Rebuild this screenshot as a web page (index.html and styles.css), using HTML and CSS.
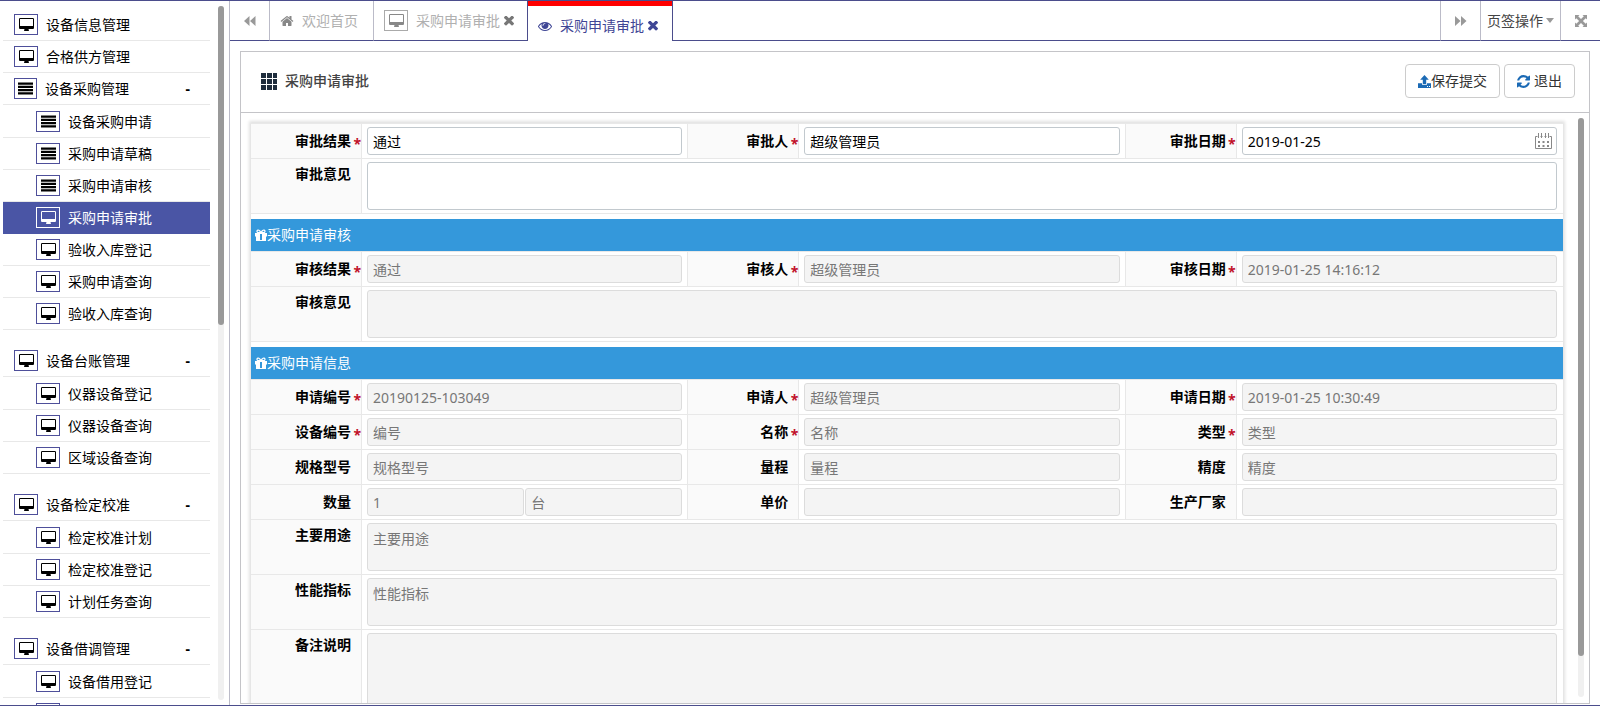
FILE: index.html
```html
<!DOCTYPE html>
<html lang="zh-CN">
<head>
<meta charset="utf-8">
<title>采购申请审批</title>
<link rel="stylesheet" href="styles.css">
</head>
<body>
<svg class="sprite" aria-hidden="true">
  <symbol id="desktop" viewBox="0 0 1920 1664"><path d="M1792 992v-832q0-13-9.500-22.500t-22.500-9.500h-1600q-13 0-22.500 9.500t-9.500 22.500v832q0 13 9.500 22.500t22.500 9.500h1600q13 0 22.500-9.500t9.500-22.500zm128-832v1088q0 66-47 113t-113 47h-544q0 37 16 77.500t32 71 16 43.500q0 26-19 45t-45 19h-512q-26 0-45-19t-19-45q0-14 16-44t32-70 16-78h-544q-66 0-113-47t-47-113v-1088q0-66 47-113t113-47h1600q66 0 113 47t47 113z"/></symbol>
  <symbol id="list" viewBox="0 0 14 11"><path d="M0 0h14v2H0zM0 3h14v2H0zM0 6h14v2H0zM0 9h14v2H0z"/></symbol>
  <symbol id="back" viewBox="0 0 12 10"><path d="M5.500 0v10L0 5zM11.500 0v10L6 5z"/></symbol>
  <symbol id="forward" viewBox="0 0 12 10"><path d="M0 0v10l5.500-5zM6 0v10l5.500-5z"/></symbol>
  <symbol id="home" viewBox="0 0 1792 1792"><path d="M1472 992v480q0 26-19 45t-45 19h-384v-384h-256v384h-384q-26 0-45-19t-19-45v-480q0-1 .5-3t.5-3l575-474 575 474q1 2 1 6zm223-69l-62 74q-8 9-21 11h-3q-13 0-21-7l-692-577-692 577q-12 8-24 7-13-2-21-11l-62-74q-8-10-7-23.500t11-21.500l719-599q32-26 76-26t76 26l244 204v-195q0-14 9-23t23-9h192q14 0 23 9t9 23v408l219 182q10 8 11 21.500t-7 23.500z"/></symbol>
  <symbol id="times" viewBox="300 410 1192 1192"><path d="M1490 1322q0 40-28 68l-136 136q-28 28-68 28t-68-28l-294-294-294 294q-28 28-68 28t-68-28l-136-136q-28-28-28-68t28-68l294-294-294-294q-28-28-28-68t28-68l136-136q28-28 68-28t68 28l294 294 294-294q28-28 68-28t68 28l136 136q28 28 28 68t-28 68l-294 294 294 294q28 28 28 68z"/></symbol>
  <symbol id="eye" viewBox="0 0 1792 1792"><path d="M1664 960q-152-236-381-353 61 104 61 225 0 185-131.500 316.500t-316.500 131.500-316.500-131.500-131.500-316.500q0-121 61-225-229 117-381 353 133 205 333.500 326.500t434.500 121.500 434.500-121.500 333.500-326.500zm-720-384q0-20-14-34t-34-14q-125 0-214.500 89.500t-89.500 214.500q0 20 14 34t34 14 34-14 14-34q0-86 61-147t147-61q20 0 34-14t14-34zm848 384q0 34-20 69-140 230-376.500 368.500t-499.500 138.500-499.500-139-376.500-368q-20-35-20-69t20-69q140-229 376.500-368t499.500-139 499.500 139 376.500 368q20 35 20 69z"/></symbol>
  <symbol id="refresh" viewBox="128 128 1536 1536"><path d="M1639 1056q0 5-1 7-64 268-268 434.500t-478 166.500q-146 0-282.500-55t-243.500-157l-129 129q-19 19-45 19t-45-19-19-45v-448q0-26 19-45t45-19h448q26 0 45 19t19 45-19 45l-137 137q71 66 161 102t187 36q134 0 250-65t186-179q11-17 53-117 8-23 30-23h192q13 0 22.500 9.500t9.500 22.500zm25-800v448q0 26-19 45t-45 19h-448q-26 0-45-19t-19-45 19-45l138-138q-148-137-349-137-134 0-250 65t-186 179q-11 17-53 117-8 23-30 23h-199q-13 0-22.500-9.500t-9.500-22.500v-7q65-268 270-434.500t480-166.500q146 0 284 55.500t245 156.500l130-129q19-19 45-19t45 19 19 45z"/></symbol>
  <symbol id="upload" viewBox="0 0 13 13"><path d="M6.500 0l4.300 4.700H8.200V9H4.800V4.700H2.200zM0 8.300h4v1.500h5V8.300h4V13H0z"/><path class="dots" d="M9 11h1v1H9zM11 11h1v1h-1z"/></symbol>
  <symbol id="expand" viewBox="0 0 12 12"><path d="M0 0h4.500L3.200 1.300 6 4.100l2.800-2.800L7.500 0H12v4.500l-1.300-1.300L7.900 6l2.800 2.800L12 7.500V12H7.500l1.300-1.300L6 7.900l-2.800 2.800L4.500 12H0V7.500l1.300 1.300L4.100 6 1.300 3.200 0 4.500z"/></symbol>
  <symbol id="grid" viewBox="0 0 17 17"><path d="M0 0h5v5H0zM6 0h5v5H6zM12 0h4v5h-4zM0 6h5v5H0zM6 6h5v5H6zM12 6h4v5h-4zM0 12h5v5H0zM6 12h5v5H6zM12 12h4v5h-4z"/></symbol>
  <symbol id="gift" viewBox="0 0 12 12"><path fill-rule="evenodd" d="M0 4h2.300C.8 3 1.200.5 3.200.5c1.400 0 2.200 1 2.800 2C6.600 1.500 7.400.5 8.800.5c2 0 2.400 2.500.9 3.500H12v3.500h-1V12H1V7.500H0zM3.200 1.700c-.9 0-.9 1.300 0 1.300h1.600c-.4-.7-.9-1.300-1.600-1.300zm5.600 0c-.7 0-1.200.6-1.600 1.300h1.600c.9 0 .9-1.300 0-1.300zM5 5v6h2V5z"/></symbol>
  <symbol id="calendar" viewBox="0 0 17 16"><path d="M.5 3.500v12h16v-12M.5 3.500h2M5.500 3.500h2M9.500 3.500h2M14.500 3.500h2M3.500 0v5M6.500 0v5M10.500 0v5M13.500 0v5" fill="none" stroke="currentColor"/><path d="M3 8h2v2H3zM7.500 8h2v2h-2zM12 8h2v2h-2zM3 12h2v2H3zM7.500 12h2v2h-2zM12 12h2v2h-2z"/></symbol>
</svg>
<div class="app">
  <nav class="sidebar">
    <ul class="menu">
      <li><a class="item" href="#"><span class="box"><svg><use href="#desktop"/></svg></span>设备信息管理</a></li>
      <li><a class="item" href="#"><span class="box"><svg><use href="#desktop"/></svg></span>合格供方管理</a></li>
      <li><a class="item" href="#"><span class="box lines"><svg><use href="#list"/></svg></span>设备采购管理<span class="toggle">-</span></a>
        <ul class="submenu">
          <li><a class="item" href="#"><span class="box"><svg><use href="#list"/></svg></span>设备采购申请</a></li>
          <li><a class="item" href="#"><span class="box"><svg><use href="#list"/></svg></span>采购申请草稿</a></li>
          <li><a class="item" href="#"><span class="box"><svg><use href="#list"/></svg></span>采购申请审核</a></li>
          <li><a class="item active" href="#"><span class="box"><svg><use href="#desktop"/></svg></span>采购申请审批</a></li>
          <li><a class="item" href="#"><span class="box"><svg><use href="#desktop"/></svg></span>验收入库登记</a></li>
          <li><a class="item" href="#"><span class="box"><svg><use href="#desktop"/></svg></span>采购申请查询</a></li>
          <li><a class="item" href="#"><span class="box"><svg><use href="#desktop"/></svg></span>验收入库查询</a></li>
        </ul></li>
      <li><a class="item" href="#"><span class="box"><svg><use href="#desktop"/></svg></span>设备台账管理<span class="toggle">-</span></a>
        <ul class="submenu">
          <li><a class="item" href="#"><span class="box"><svg><use href="#desktop"/></svg></span>仪器设备登记</a></li>
          <li><a class="item" href="#"><span class="box"><svg><use href="#desktop"/></svg></span>仪器设备查询</a></li>
          <li><a class="item" href="#"><span class="box"><svg><use href="#desktop"/></svg></span>区域设备查询</a></li>
        </ul></li>
      <li><a class="item" href="#"><span class="box"><svg><use href="#desktop"/></svg></span>设备检定校准<span class="toggle">-</span></a>
        <ul class="submenu">
          <li><a class="item" href="#"><span class="box"><svg><use href="#desktop"/></svg></span>检定校准计划</a></li>
          <li><a class="item" href="#"><span class="box"><svg><use href="#desktop"/></svg></span>检定校准登记</a></li>
          <li><a class="item" href="#"><span class="box"><svg><use href="#desktop"/></svg></span>计划任务查询</a></li>
        </ul></li>
      <li><a class="item" href="#"><span class="box"><svg><use href="#desktop"/></svg></span>设备借调管理<span class="toggle">-</span></a>
        <ul class="submenu">
          <li><a class="item" href="#"><span class="box"><svg><use href="#desktop"/></svg></span>设备借用登记</a></li>
          <li><a class="item" href="#" aria-label="菜单"><span class="box"><svg><use href="#desktop"/></svg></span></a></li>
        </ul></li>
    </ul>
    <div class="track side-track"><div class="thumb side-thumb"></div></div>
  </nav>
  <main class="main">
    <div class="tabs">
      <button class="tab-btn first" type="button" aria-label="向左"><svg class="ico"><use href="#back"/></svg></button>
      <a class="tab home" href="#"><svg class="ico i14"><use href="#home"/></svg>欢迎首页</a>
      <a class="tab doc" href="#"><span class="box"><svg><use href="#desktop"/></svg></span>采购申请审批<svg class="close"><use href="#times"/></svg></a>
      <a class="tab current" href="#"><svg class="ico i14"><use href="#eye"/></svg>采购申请审批<svg class="close"><use href="#times"/></svg></a>
      <span class="spacer"></span>
      <button class="tab-btn" type="button" aria-label="向右"><svg class="ico"><use href="#forward"/></svg></button>
      <button class="tab-btn ops" type="button">页签操作<span class="caret"></span></button>
      <button class="tab-btn" type="button" aria-label="全屏"><svg class="ico"><use href="#expand"/></svg></button>
    </div>
    <section class="panel">
      <header class="panel-head">
        <svg class="grid-ico"><use href="#grid"/></svg>
        <h1>采购申请审批</h1>
        <button class="btn" type="button"><svg><use href="#upload"/></svg>保存提交</button>
        <button class="btn gap" type="button"><svg><use href="#refresh"/></svg>退出</button>
      </header>
      <div class="panel-body">
        <form class="form">
          <div class="block">
            <div class="row">
              <label class="lbl" for="a1">审批结果<span class="req">*</span></label><div class="cell"><input id="a1" value="通过"></div>
              <label class="lbl" for="a2">审批人<span class="req">*</span></label><div class="cell"><input id="a2" value="超级管理员"></div>
              <label class="lbl" for="a3">审批日期<span class="req">*</span></label><div class="cell"><input id="a3" value="2019-01-25"><svg class="cal"><use href="#calendar"/></svg></div>
            </div>
            <div class="row wide"><label class="lbl" for="a4">审批意见</label><div class="cell"><textarea id="a4"></textarea></div></div>
          </div>
          <h2 class="bar"><svg><use href="#gift"/></svg>采购申请审核</h2>
          <div class="block">
            <div class="row">
              <label class="lbl" for="b1">审核结果<span class="req">*</span></label><div class="cell"><input id="b1" value="通过" disabled></div>
              <label class="lbl" for="b2">审核人<span class="req">*</span></label><div class="cell"><input id="b2" value="超级管理员" disabled></div>
              <label class="lbl" for="b3">审核日期<span class="req">*</span></label><div class="cell"><input id="b3" value="2019-01-25 14:16:12" disabled></div>
            </div>
            <div class="row wide"><label class="lbl" for="b4">审核意见</label><div class="cell"><textarea id="b4" disabled></textarea></div></div>
          </div>
          <h2 class="bar"><svg><use href="#gift"/></svg>采购申请信息</h2>
          <div class="block">
            <div class="row">
              <label class="lbl" for="c1">申请编号<span class="req">*</span></label><div class="cell"><input id="c1" value="20190125-103049" disabled></div>
              <label class="lbl" for="c2">申请人<span class="req">*</span></label><div class="cell"><input id="c2" value="超级管理员" disabled></div>
              <label class="lbl" for="c3">申请日期<span class="req">*</span></label><div class="cell"><input id="c3" value="2019-01-25 10:30:49" disabled></div>
            </div>
            <div class="row">
              <label class="lbl" for="d1">设备编号<span class="req">*</span></label><div class="cell"><input id="d1" placeholder="编号" disabled></div>
              <label class="lbl" for="d2">名称<span class="req">*</span></label><div class="cell"><input id="d2" placeholder="名称" disabled></div>
              <label class="lbl" for="d3">类型<span class="req">*</span></label><div class="cell"><input id="d3" placeholder="类型" disabled></div>
            </div>
            <div class="row">
              <label class="lbl" for="e1">规格型号</label><div class="cell"><input id="e1" placeholder="规格型号" disabled></div>
              <label class="lbl" for="e2">量程</label><div class="cell"><input id="e2" placeholder="量程" disabled></div>
              <label class="lbl" for="e3">精度</label><div class="cell"><input id="e3" placeholder="精度" disabled></div>
            </div>
            <div class="row">
              <label class="lbl" for="f1">数量</label><div class="cell"><input id="f1" value="1" disabled><input aria-label="单位" value="台" disabled></div>
              <label class="lbl" for="f2">单价</label><div class="cell"><input id="f2" disabled></div>
              <label class="lbl" for="f3">生产厂家</label><div class="cell"><input id="f3" disabled></div>
            </div>
            <div class="row wide"><label class="lbl" for="g1">主要用途</label><div class="cell"><textarea id="g1" placeholder="主要用途" disabled></textarea></div></div>
            <div class="row wide"><label class="lbl" for="g2">性能指标</label><div class="cell"><textarea id="g2" placeholder="性能指标" disabled></textarea></div></div>
            <div class="row wide"><label class="lbl" for="g3">备注说明</label><div class="cell"><textarea id="g3" class="tall" disabled></textarea></div></div>
          </div>
        </form>
        <div class="track body-track"><div class="thumb body-thumb"></div></div>
      </div>
    </section>
  </main>
</div>
</body>
</html>
```
FILE: styles.css
```css
* { box-sizing: border-box; }
body { margin: 0; }
body, input, textarea, button {
  font-family: "Noto Sans", "Noto Sans CJK SC", sans-serif;
  font-size: 14px;
  line-height: 20px;
  color: #000;
}
svg { fill: currentColor; flex: none; }
.sprite { display: none; }
a { color: inherit; text-decoration: none; }
ul { list-style: none; margin: 0; padding: 0; }
button { background: none; border: 0; padding: 0; cursor: pointer; }

.app {
  display: flex;
  height: 100vh;
  overflow: hidden;
  border-top: 1px solid #4b4d8c;
  border-bottom: 1px solid #4b4d8c;
}

/* sidebar */
.sidebar {
  position: relative;
  flex: none;
  width: 230px;
  overflow: hidden;
  border-right: 1px solid #bbbbc8;
}
.menu { padding: 8px 19px 0 3px; }
.item {
  display: flex;
  align-items: center;
  height: 32px;
  padding-left: 11px;
  border-bottom: 1px solid #e8e8e8;
}
.submenu { padding: 1px 0 15px; }
.submenu .item { padding-left: 33px; }
.box {
  display: flex;
  align-items: center;
  justify-content: center;
  width: 24px;
  height: 21px;
  margin-right: 8px;
  border: 1px solid #4e4f9a;
}
.box.lines { width: 23px; }
.box svg { width: 15px; height: 13px; }
.toggle { margin-left: auto; margin-right: 20px; font-weight: 700; }
.item.active { background: #4a55a5; border-color: #4a55a5; color: #fff; }
.active .box { border-color: #fff; }

.track { position: absolute; width: 6px; border-radius: 3px; background: #f0f0f0; }
.thumb { border-radius: 3px; background: #999; }
.side-track { right: 5px; top: 5px; bottom: 5px; }
.side-thumb { height: 46%; }

/* tabs */
.main { flex: 1; min-width: 0; display: flex; flex-direction: column; }
.tabs { display: flex; height: 40px; flex: none; }
.tabs > * { border-bottom: 1px solid #4b4d8c; }
.spacer { flex: 1; }
.tab-btn {
  display: flex;
  align-items: center;
  justify-content: center;
  width: 40px;
  border-left: 1px solid #bbbbc8;
  color: #999;
}
.tab-btn.first { border-left: 0; border-right: 1px solid #bbbbc8; }
.tab-btn.ops { width: 80px; color: #444; }
.caret { border: 4px solid transparent; border-top: 5px solid #999; border-bottom: 0; margin-left: 3px; }
.ico { width: 12px; height: 12px; }
.ico.i14 { width: 14px; height: 14px; }
.tab { display: flex; align-items: center; padding: 0 10px; color: #b0b0b0; }
.home { border-right: 1px solid #bbbbc8; padding-right: 15px; }
.home .ico { margin-right: 8px; color: #888; }
.doc .box { border-color: #aaa; color: #888; }
.doc { padding-right: 13px; }
.close { width: 10px; height: 10px; margin-left: 4px; color: #777; }
.tab.current {
  border: solid #4b4d8c;
  border-width: 0 1px;
  box-shadow: inset 0 5px #f00;
  padding: 9px 14px 0 10px;
  color: #3f4695;
}
.current .ico { margin-right: 8px; }
.current .close { color: inherit; }

/* panel */
.panel {
  flex: 1;
  min-height: 0;
  display: flex;
  flex-direction: column;
  margin: 10px 10px 1px;
  border: 1px solid #c4c4c8;
}
.panel-head {
  display: flex;
  align-items: center;
  flex: none;
  height: 61px;
  padding: 0 14px 2px 20px;
  border-bottom: 1px solid #c4c4c8;
}
.grid-ico { width: 17px; height: 17px; color: #1f2d3d; }
h1 { flex: 1; margin: 0 0 0 7px; font-size: 14px; font-weight: 500; color: #444; }
.btn {
  display: flex;
  align-items: center;
  height: 34px;
  padding: 0 12px;
  border: 1px solid #ccc;
  border-radius: 4px;
  color: #333;
}
.btn svg { width: 13px; height: 13px; color: #1b6ab5; }
.dots { fill: #fff; }
.btn.gap { margin-left: 4px; }
.btn.gap svg { margin-right: 4px; }
.panel-body { position: relative; flex: 1; min-height: 0; overflow: hidden; padding: 10px 26px 0 10px; }
.body-track { right: 5px; top: 5px; bottom: 6px; }
.body-thumb { height: 93%; }

/* form */
.form { box-shadow: 0 0 3px 2px #e2e2e2; background: #fff; }
.block { border-top: 1px solid #e8e8e8; padding-bottom: 5px; }
.row { display: grid; grid-template-columns: repeat(3, 111px 1fr); border-bottom: 1px solid #e8e8e8; }
.row.wide { grid-template-columns: 111px 1fr; }
.lbl {
  padding: 7px 10px 7px 0;
  border-right: 1px solid #e8e8e8;
  background: #fafafa;
  text-align: right;
  font-weight: 700;
}
.wide .lbl { padding-top: 5px; }
.req {
  display: inline-block;
  width: 10px;
  margin-right: -10px;
  line-height: 14px;
  vertical-align: -3px;
  color: #c1122b;
}
.cell { position: relative; display: flex; gap: 1px; padding: 3px 5px; border-right: 1px solid #e8e8e8; min-width: 0; }
.cell:last-child { border-right-color: transparent; }
input, textarea {
  display: block;
  flex: 1;
  width: 100%;
  min-width: 0;
  height: 28px;
  padding: 0 5px;
  border: 1px solid #c2c9ce;
  border-radius: 3px;
  background: #fff;
}
textarea { height: 48px; padding: 5px; resize: none; }
textarea.tall { height: 102px; }
input:disabled, textarea:disabled { background: #f4f4f4; border-color: #dcdcdc; color: #777; }
::placeholder { color: #777; opacity: 1; }
.cal { position: absolute; right: 10px; top: 9px; width: 17px; height: 16px; color: #888; }

/* section bars */
.bar {
  display: flex;
  align-items: center;
  height: 32px;
  margin: 0;
  padding-left: 4px;
  background: #3498db;
  color: #fff;
  font-size: 14px;
  font-weight: 400;
}
.bar svg { width: 12px; height: 12px; }
```
